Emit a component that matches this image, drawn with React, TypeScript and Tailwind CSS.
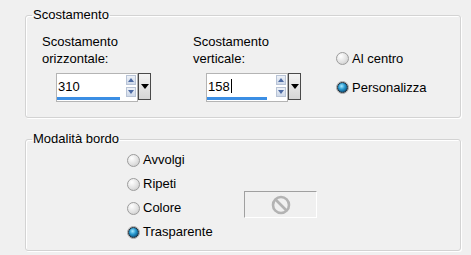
const font = { fontFamily: '"Liberation Sans", Arial, sans-serif' };

const Radio = ({ checked }: { checked?: boolean }) =>
  checked ? (
    <span className="w-[13px] h-[13px] rounded-full border border-[#a4a4a4] bg-[#ececec] flex items-center justify-center shrink-0">
      <span className="w-[11px] h-[11px] rounded-full border border-[#1c2a36] bg-[radial-gradient(circle_at_40%_35%,#a6eaff_0%,#2a9ad0_40%,#0b527e_80%)]"></span>
    </span>
  ) : (
    <span className="w-[13px] h-[13px] rounded-full border border-[#9c9c9c] bg-[radial-gradient(circle_at_35%_30%,#ffffff_0%,#e2e2e2_55%,#c4c4c4_100%)] shrink-0"></span>
  );

const SpinBox = ({ value, bar, caret }: { value: string; bar: number; caret?: boolean }) => (
  <div className="flex items-start">
    <div className="w-[82px] h-[29px] bg-white border border-[#b4b4b4] flex flex-col">
      <div className="flex flex-1">
        <div className="flex-1 flex items-center pl-[1px] pt-[1px] text-[13px] text-black leading-none">
          {value}
          {caret && <span className="w-[1px] h-[14px] bg-black ml-[1px]"></span>}
        </div>
        <div className="w-[11px] flex flex-col gap-[2px] pt-[1px] pr-[1px]">
          <div className="h-[10px] border border-[#b9c4d6] bg-gradient-to-b from-[#eef2f8] to-[#cfd9e9] flex items-center justify-center">
            <span className="w-0 h-0 border-l-[3px] border-r-[3px] border-b-[4px] border-l-transparent border-r-transparent border-b-[#4c6aa3]"></span>
          </div>
          <div className="h-[10px] border border-[#b9c4d6] bg-gradient-to-b from-[#eef2f8] to-[#cfd9e9] flex items-center justify-center">
            <span className="w-0 h-0 border-l-[3px] border-r-[3px] border-t-[4px] border-l-transparent border-r-transparent border-t-[#4c6aa3]"></span>
          </div>
        </div>
      </div>
      <div className="h-[4px] pb-[1px]">
        <div className="h-[3px] bg-[#3b8ee4]" style={{ width: bar }}></div>
      </div>
    </div>
    <div className="w-[13px] h-[27px] border border-[#4a4a4a] bg-gradient-to-b from-[#f4f4f4] to-[#d6d6d6] flex items-center justify-center">
      <span className="w-0 h-0 border-l-[4px] border-r-[4px] border-t-[5px] border-l-transparent border-r-transparent border-t-black"></span>
    </div>
  </div>
);

const Group = ({ title, className, children }: { title: string; className: string; children: React.ReactNode }) => (
  <fieldset
    className={`w-[436px] border border-[#d3d3d3] rounded-[3px] shadow-[inset_1px_1px_0_#ffffff,1px_1px_0_#ffffff] ${className}`}
  >
    <legend className="ml-[6px] px-[1px] text-[13px] leading-[16px] text-black">{title}</legend>
    {children}
  </fieldset>
);

export default function App() {
  return (
    <div className="w-[471px] h-[255px] bg-[#f0f0f0] pl-[25px] pt-[7px] flex flex-col gap-[13px] text-black" style={font}>
      <Group title="Scostamento" className="h-[111px]">
        <div className="flex pl-[16px] pt-[10px] text-[13px] leading-[17px]">
          <div className="w-[151px]">
            <div>Scostamento</div>
            <div>orizzontale:</div>
            <div className="mt-[6px] ml-[14px]">
              <SpinBox value="310" bar={63} />
            </div>
          </div>
          <div className="w-[143px]">
            <div>Scostamento</div>
            <div>verticale:</div>
            <div className="mt-[6px] ml-[13px]">
              <SpinBox value="158" bar={60} caret />
            </div>
          </div>
          <div className="flex flex-col gap-[12px] pt-[17px]">
            <div className="flex items-center gap-[3px] h-[17px]">
              <Radio />
              <span>Al centro</span>
            </div>
            <div className="flex items-center gap-[3px] h-[17px]">
              <Radio checked />
              <span>Personalizza</span>
            </div>
          </div>
        </div>
      </Group>
      <Group title="Modalità bordo" className="h-[120px]">
        <div className="flex pl-[101px] pt-[1px] text-[13px]">
          <div className="w-[117px] flex flex-col">
            {['Avvolgi', 'Ripeti', 'Colore', 'Trasparente'].map((label, i) => (
              <div key={label} className="h-[24px] flex items-center gap-[3px]">
                <Radio checked={i === 3} />
                <span>{label}</span>
              </div>
            ))}
          </div>
          <div className="mt-[43px] w-[73px] h-[27px] border border-[#a0a0a0] border-r-white border-b-white flex items-center justify-center">
            <svg width="20" height="20" viewBox="0 0 20 20">
              <circle cx="10" cy="10" r="8" fill="none" stroke="#b3b3b3" strokeWidth="2.6" />
              <line x1="4.5" y1="4.5" x2="15.5" y2="15.5" stroke="#b3b3b3" strokeWidth="2.6" />
            </svg>
          </div>
        </div>
      </Group>
    </div>
  );
}
